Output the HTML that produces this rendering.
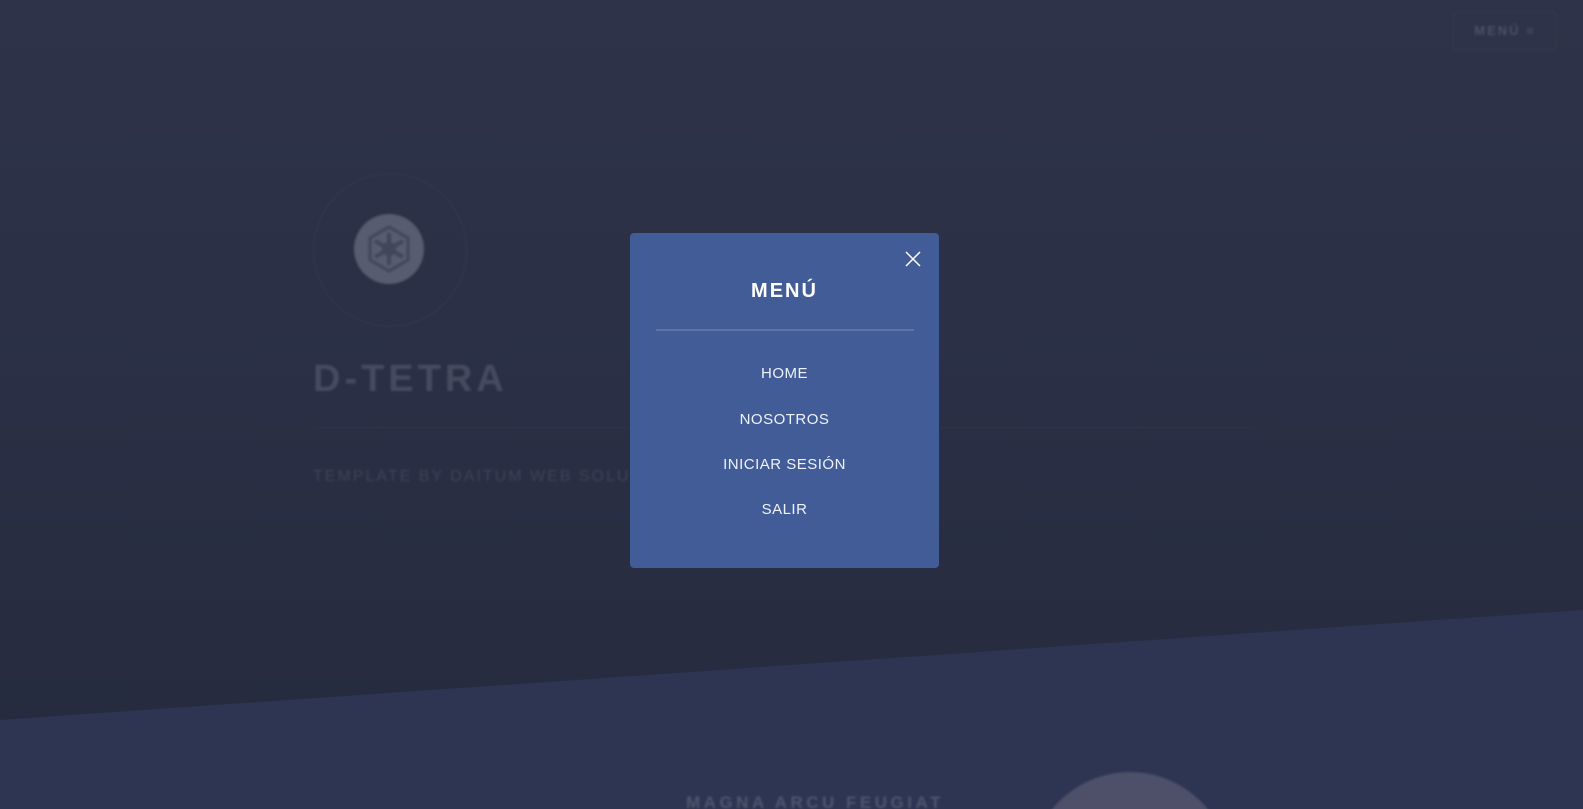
<!DOCTYPE html>
<html><head><meta charset="utf-8"><style>
html,body{margin:0;padding:0;width:1583px;height:809px;overflow:hidden;font-family:"Liberation Sans",sans-serif;}
#wrap{position:relative;width:1583px;height:809px;overflow:hidden;background:linear-gradient(180deg,#2e3349 0%,#2a2f45 50%,#252a3d 100%);}
.lower{position:absolute;left:0;top:0;width:1583px;height:809px;background:#2d3553;clip-path:polygon(0 720px,1583px 610px,1583px 809px,0 809px);}
.blur{filter:blur(1px);}
.circle{position:absolute;left:313px;top:173px;width:152px;height:152px;border:1px solid #353a52;border-radius:50%;}
.logo{position:absolute;left:354px;top:214px;width:70px;height:70px;border-radius:50%;background:#575c70;}
.title{position:absolute;left:313px;top:358px;font-size:38px;font-weight:bold;letter-spacing:4px;color:#454b60;}
.hr{position:absolute;left:313px;top:427px;width:942px;height:1px;background:#343951;}
.sub{position:absolute;left:313px;top:468px;font-size:16px;letter-spacing:2px;color:#3e4459;}
.mbtn{position:absolute;left:1453px;top:12px;width:102px;height:36px;border:1px solid #363b52;border-radius:4px;color:#4c5166;font-size:13px;font-weight:bold;letter-spacing:2px;line-height:36px;text-align:center;}
.bigc{position:absolute;left:1030px;top:772px;width:200px;height:200px;border-radius:50%;background:#4d5068;}
.lowt{position:absolute;left:686px;top:793px;font-size:17px;font-weight:bold;letter-spacing:3.5px;color:#50566c;}
.modal{position:absolute;left:630px;top:233px;width:309px;height:335px;background:#425c98;border-radius:4px;}
.x{position:absolute;left:905px;top:251px;}
.line{position:absolute;left:656px;top:329px;width:258px;height:2px;background:#5c74aa;}
.item{position:absolute;left:630px;width:309px;text-align:center;color:#eef2fb;font-size:15px;letter-spacing:.5px;}
</style></head><body><div id="wrap">
<div class="lower"></div>
<div class="blur">
<div class="circle"></div>
<div class="logo"><svg width="70" height="70" viewBox="0 0 70 70"><path d="M35 13 L54 24 L54 46 L35 57 L16 46 L16 24 Z" fill="none" stroke="#41465b" stroke-width="3"/><g stroke="#41465b" stroke-width="4"><line x1="35" y1="19" x2="35" y2="51"/><line x1="21" y1="27" x2="49" y2="43"/><line x1="21" y1="43" x2="49" y2="27"/></g><circle cx="35" cy="35" r="7" fill="#41465b"/></svg></div>
<div class="title">D-TETRA</div>
<div class="hr"></div>
<div class="sub">TEMPLATE BY DAITUM WEB SOLUTIONS</div>
<div class="mbtn">MENÚ &#8801;</div>
<div class="bigc"></div>
<div class="lowt">MAGNA ARCU FEUGIAT</div>
</div>
<div class="modal"></div>
<svg class="x" width="16" height="16" viewBox="0 0 16 16"><path d="M1 1L15 15M15 1L1 15" stroke="#fff" stroke-width="1.5"/></svg>
<div class="item" style="top:280px;font-size:20px;font-weight:bold;letter-spacing:2px;color:#fff">MENÚ</div>
<div class="line"></div>
<div class="item" style="top:365px">HOME</div>
<div class="item" style="top:411px">NOSOTROS</div>
<div class="item" style="top:456px">INICIAR SESIÓN</div>
<div class="item" style="top:501px">SALIR</div>
</div></body></html>
